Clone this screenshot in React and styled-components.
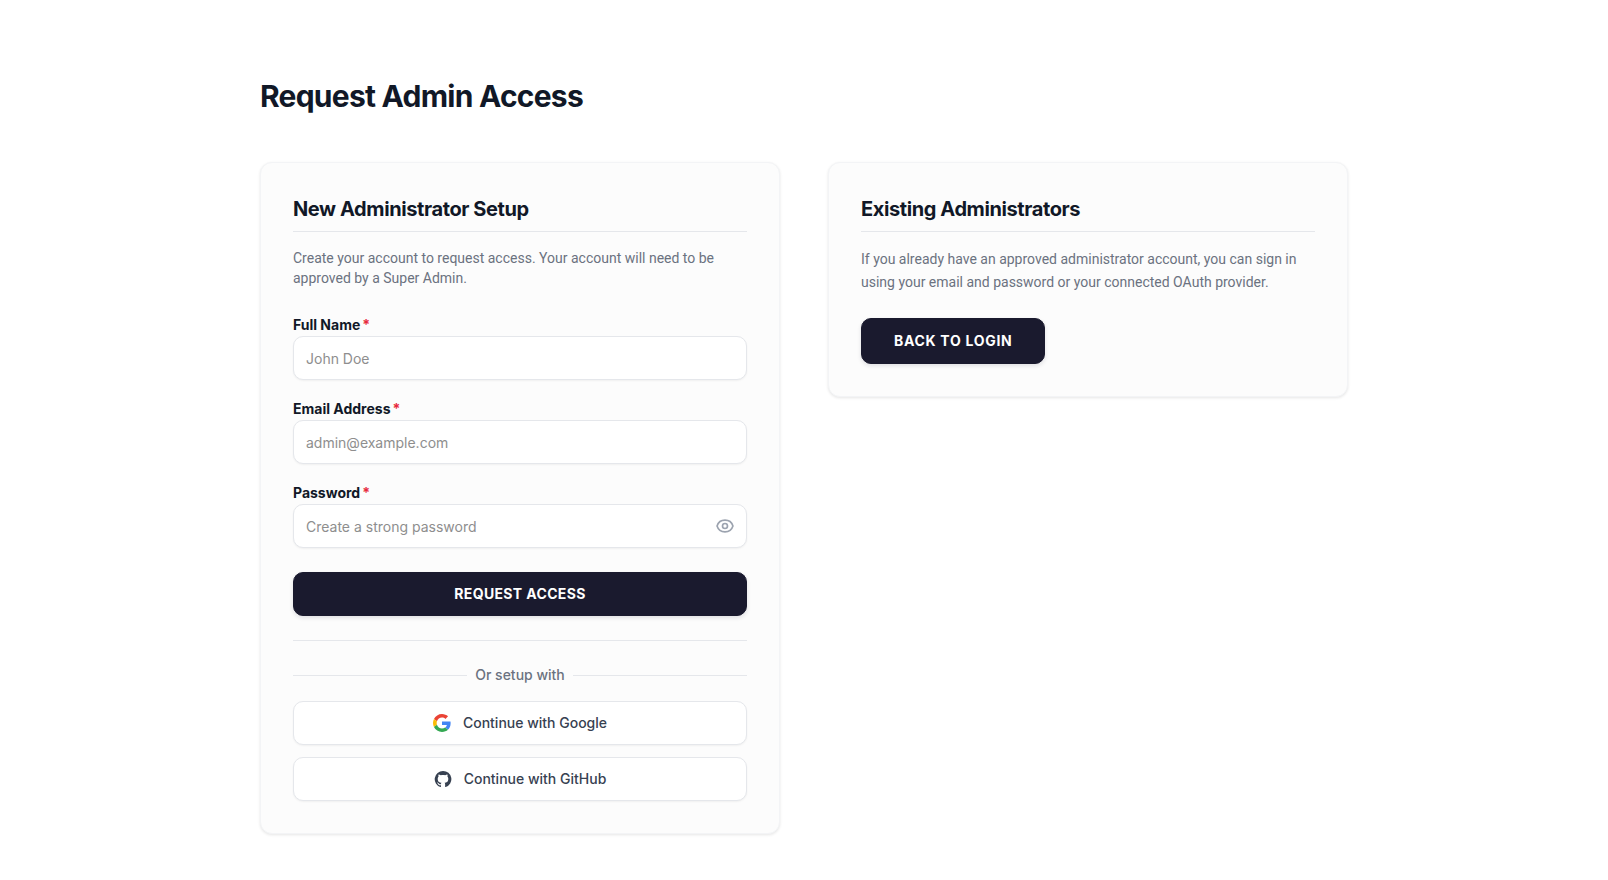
import React, { useState } from "react";
import styled, { createGlobalStyle } from "styled-components";

const GlobalStyle = createGlobalStyle`
    *, *::before, *::after {
        box-sizing: border-box;
    }
    body {
        margin: 0;
        background: #ffffff;
        color: #111827;
        font-family: Inter, "Liberation Sans", sans-serif;
        font-size: 14px;
        line-height: 20px;
        -webkit-font-smoothing: antialiased;
    }
    h1, h2, p {
        margin: 0;
    }
    button, input {
        font: inherit;
    }
`;

const Page = styled.main`
    max-width: 1152px;
    margin: 0 auto;
    padding: 78px 32px 46px;
`;

const Title = styled.h1`
    margin-bottom: 48px;
    font-size: 30px;
    font-weight: 700;
    line-height: 36px;
    letter-spacing: -0.025em;
`;

const Columns = styled.div`
    display: grid;
    grid-template-columns: 1fr 1fr;
    align-items: start;
    gap: 48px;

    @media (max-width: 800px) {
        grid-template-columns: 1fr;
    }
`;

const Card = styled.section`
    padding: 32px;
    border: 1px solid #f3f4f6;
    border-radius: 12px;
    background: #fcfcfc;
    box-shadow: 0 1px 3px rgba(0, 0, 0, 0.1);
`;

const CardTitle = styled.h2`
    margin-bottom: 16px;
    padding-bottom: 8px;
    border-bottom: 1px solid #e5e7eb;
    font-size: 20px;
    font-weight: 700;
    line-height: 28px;
    letter-spacing: -0.02em;
`;

const CardText = styled.p`
    color: #6b7280;
    font-family: Roboto, "Liberation Sans", sans-serif;
    line-height: ${(props) => (props.$relaxed ? "23px" : "20px")};
`;

const Form = styled.form`
    display: flex;
    flex-direction: column;
    gap: 20px;
    margin-top: 28px;
    padding-bottom: 24px;
    border-bottom: 1px solid #e5e7eb;
`;

const FieldBox = styled.div`
    display: flex;
    flex-direction: column;
    gap: 2px;
`;

const Label = styled.label`
    font-weight: 700;
    line-height: 18px;
`;

const Required = styled.span`
    margin-left: 2px;
    color: #e7293b;
`;

const InputWrap = styled.div`
    position: relative;
    display: flex;
`;

const Input = styled.input`
    width: 100%;
    height: 44px;
    padding: 0 12px;
    border: 1px solid #e5e7eb;
    border-radius: 10px;
    background: #ffffff;
    color: #111827;
    box-shadow: 0 1px 2px rgba(0, 0, 0, 0.05);

    &::placeholder {
        color: #8e8e8e;
        opacity: 1;
    }
`;

const EyeButton = styled.button`
    position: absolute;
    top: 0;
    right: 0;
    display: flex;
    align-items: center;
    height: 44px;
    padding: 0 12px;
    border: 0;
    background: none;
    color: #9ca3af;
    cursor: pointer;
`;

const PrimaryButton = styled.button`
    height: ${(props) => (props.$large ? "46px" : "44px")};
    margin-top: ${(props) => (props.$large ? "24px" : "4px")};
    padding: 0 32px;
    border: 1px solid #1a1a2e;
    border-radius: 10px;
    background: #1a1a2e;
    color: #ffffff;
    font-weight: 700;
    letter-spacing: ${(props) => (props.$large ? "0.05em" : "0.025em")};
    text-transform: uppercase;
    box-shadow: 0 2px 4px rgba(26, 26, 46, 0.12);
    cursor: pointer;
`;

const Separator = styled.div`
    display: flex;
    align-items: center;
    gap: 8px;
    margin: 24px 0 16px;
    color: #6b7280;
    font-weight: 500;

    &::before,
    &::after {
        content: "";
        flex: 1;
        height: 1px;
        background: #e5e7eb;
    }
`;

const Providers = styled.div`
    display: flex;
    flex-direction: column;
    gap: 12px;
`;

const ProviderButton = styled.button`
    display: flex;
    align-items: center;
    justify-content: center;
    gap: 12px;
    height: 44px;
    border: 1px solid #e5e7eb;
    border-radius: 10px;
    background: #ffffff;
    color: #374151;
    font-weight: 500;
    box-shadow: 0 1px 2px rgba(0, 0, 0, 0.05);
    cursor: pointer;
`;

function EyeIcon() {
    return (
        <svg width="20" height="20" viewBox="0 0 24 24" fill="none" stroke="currentColor" strokeWidth="2" strokeLinecap="round" strokeLinejoin="round">
            <path d="M15 12a3 3 0 1 1-6 0 3 3 0 0 1 6 0z" />
            <path d="M2.458 12C3.732 7.943 7.523 5 12 5c4.478 0 8.268 2.943 9.542 7-1.274 4.057-5.064 7-9.542 7-4.477 0-8.268-2.943-9.542-7z" />
        </svg>
    );
}

function GoogleIcon() {
    return (
        <svg width="18" height="18" viewBox="0 0 48 48">
            <path fill="#EA4335" d="M24 9.5c3.54 0 6.71 1.22 9.21 3.6l6.85-6.85C35.9 2.38 30.47 0 24 0 14.62 0 6.51 5.38 2.56 13.22l7.98 6.19C12.43 13.72 17.74 9.5 24 9.5z" />
            <path fill="#4285F4" d="M46.98 24.55c0-1.57-.15-3.09-.38-4.55H24v9.02h12.94c-.58 2.96-2.26 5.48-4.78 7.18l7.73 6c4.51-4.18 7.09-10.36 7.09-17.65z" />
            <path fill="#FBBC05" d="M10.53 28.59c-.48-1.45-.76-2.99-.76-4.59s.27-3.14.76-4.59l-7.98-6.19C.92 16.46 0 20.12 0 24c0 3.88.92 7.54 2.56 10.78l7.97-6.19z" />
            <path fill="#34A853" d="M24 48c6.48 0 11.93-2.13 15.89-5.81l-7.73-6c-2.15 1.45-4.92 2.3-8.16 2.3-6.26 0-11.57-4.22-13.47-9.91l-7.98 6.19C6.51 42.62 14.62 48 24 48z" />
        </svg>
    );
}

function GitHubIcon() {
    return (
        <svg width="18" height="18" viewBox="0 0 24 24" fill="currentColor">
            <path d="M12 1.27a11 11 0 0 0-3.48 21.46c.55.09.73-.28.73-.55v-1.84c-3.03.64-3.67-1.46-3.67-1.46-.55-1.29-1.28-1.65-1.28-1.65-.92-.65.1-.65.1-.65 1.1 0 1.73 1.1 1.73 1.1.92 1.65 2.57 1.2 3.21.92a2 2 0 0 1 .64-1.47c-2.47-.27-5.04-1.19-5.04-5.5 0-1.1.46-2.1 1.2-2.84a3.76 3.76 0 0 1 0-2.93s.91-.28 3.11 1.1c1.8-.49 3.7-.49 5.5 0 2.1-1.38 3.02-1.1 3.02-1.1a3.76 3.76 0 0 1 .1 2.93c.73.74 1.19 1.74 1.19 2.84 0 4.32-2.58 5.23-5.04 5.5.45.37.82.92.82 2.02v3.03c0 .27.1.64.73.55A11 11 0 0 0 12 1.27" />
        </svg>
    );
}

function Field(props) {
    return (
        <FieldBox>
            <Label htmlFor={props.id}>
                {props.label}
                <Required>*</Required>
            </Label>
            <InputWrap>
                <Input id={props.id} type={props.type} placeholder={props.placeholder} required />
                {props.children}
            </InputWrap>
        </FieldBox>
    );
}

function App() {
    const [showPassword, setShowPassword] = useState(false);

    return (
        <>
            <GlobalStyle />
            <Page>
                <Title>Request Admin Access</Title>
                <Columns>
                    <Card>
                        <CardTitle>New Administrator Setup</CardTitle>
                        <CardText>
                            Create your account to request access. Your account will need to be approved by a Super Admin.
                        </CardText>
                        <Form onSubmit={(e) => e.preventDefault()}>
                            <Field id="name" label="Full Name" type="text" placeholder="John Doe" />
                            <Field id="email" label="Email Address" type="email" placeholder="admin@example.com" />
                            <Field
                                id="password"
                                label="Password"
                                type={showPassword ? "text" : "password"}
                                placeholder="Create a strong password"
                            >
                                <EyeButton type="button" aria-label="Show password" onClick={() => setShowPassword(!showPassword)}>
                                    <EyeIcon />
                                </EyeButton>
                            </Field>
                            <PrimaryButton type="submit">Request Access</PrimaryButton>
                        </Form>
                        <Separator>Or setup with</Separator>
                        <Providers>
                            <ProviderButton type="button">
                                <GoogleIcon />
                                Continue with Google
                            </ProviderButton>
                            <ProviderButton type="button">
                                <GitHubIcon />
                                Continue with GitHub
                            </ProviderButton>
                        </Providers>
                    </Card>
                    <Card>
                        <CardTitle>Existing Administrators</CardTitle>
                        <CardText $relaxed>
                            If you already have an approved administrator account, you can sign in using your email and password or
                            your connected OAuth provider.
                        </CardText>
                        <PrimaryButton type="button" $large>Back to Login</PrimaryButton>
                    </Card>
                </Columns>
            </Page>
        </>
    );
}

export default App;
